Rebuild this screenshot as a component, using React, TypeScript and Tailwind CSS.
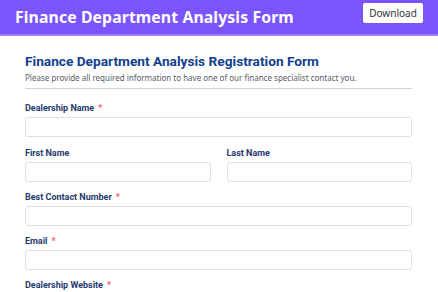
import React from "react";

function Label({ text, req }: { text: string; req?: boolean }) {
  return (
    <div className="text-[9px] font-bold text-[#1f3a6e] leading-[12px] mb-[3px]" style={{ fontFamily: 'Roboto,"Noto Sans",sans-serif' }}>
      {text}
      {req && <span className="text-[#f25c5c] ml-[4px]">*</span>}
    </div>
  );
}

function Input() {
  return <div className="h-[20px] w-full rounded-[3px] border border-[#dce1e7] bg-white" />;
}

export default function App() {
  return (
    <div className="w-[438px] h-[292px] overflow-hidden bg-white" style={{ fontFamily: '"Noto Sans",Arial,sans-serif' }}>
      <div className="h-[36px] bg-[#7b55fb] border-b-[2px] border-[#9c80fc] flex items-center justify-between pl-[15px] pr-[15px]">
        <div className="text-white font-bold text-[15.8px] tracking-[0.1px] mt-[1px]" style={{ fontFamily: '"Noto Sans",Inter,sans-serif' }}>
          Finance Department Analysis Form
        </div>
        <div className="-mt-[8px] h-[20px] w-[60px] bg-white rounded-[2px] flex items-center justify-center text-[10px] text-[#333]" style={{ fontFamily: '"Noto Sans",sans-serif' }}>
          Download
        </div>
      </div>
      <div className="pl-[25px] pr-[26px]">
        <div className="mt-[16px] text-[13.7px] font-bold text-[#123f8f] leading-[18px]" style={{ fontFamily: 'Roboto,"Noto Sans",sans-serif' }}>
          Finance Department Analysis Registration Form
        </div>
        <div className="mt-[2px] text-[8px] text-[#555d66] leading-[11px]">
          Please provide all required information to have one of our finance specialist contact you.
        </div>
        <div className="mt-[5px] h-px bg-[#cbd3de]" />
        <div className="mt-[13px]">
          <Label text="Dealership Name" req />
          <Input />
        </div>
        <div className="mt-[10px] grid grid-cols-2 gap-[16px]">
          <div>
            <Label text="First Name" />
            <Input />
          </div>
          <div>
            <Label text="Last Name" />
            <Input />
          </div>
        </div>
        <div className="mt-[9px]">
          <Label text="Best Contact Number" req />
          <Input />
        </div>
        <div className="mt-[9px]">
          <Label text="Email" req />
          <Input />
        </div>
        <div className="mt-[9px]">
          <Label text="Dealership Website" req />
          <Input />
        </div>
      </div>
    </div>
  );
}
